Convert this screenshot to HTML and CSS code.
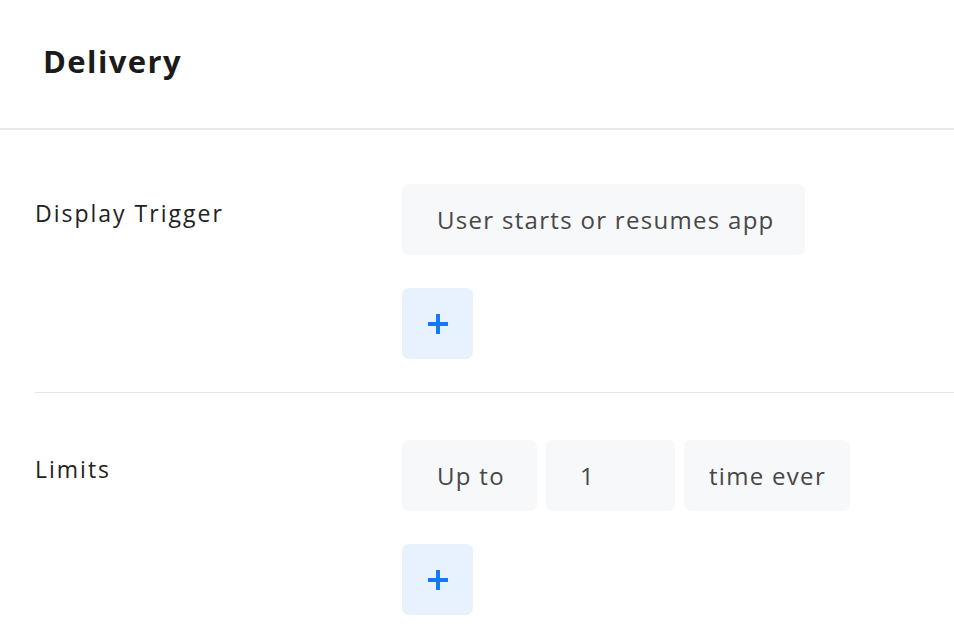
FILE: index.html
```html
<!DOCTYPE html>
<html>
<head>
<meta charset="utf-8">
<link rel="stylesheet" href="styles.css">
</head>
<body>
<div class="panel">
  <header class="header"><h1 class="title">Delivery</h1></header>
  <section class="section first">
    <div class="label">Display Trigger</div>
    <div class="content">
      <div class="row"><div class="box wide">User starts or resumes app</div></div>
      <button class="add" aria-label="Add">
        <svg width="20" height="20" viewBox="0 0 20 20"><path d="M10 0v20M0 10h20" stroke="#1877f2" stroke-width="4"/></svg>
      </button>
    </div>
  </section>
  <div class="divider"></div>
  <section class="section second">
    <div class="label">Limits</div>
    <div class="content">
      <div class="row">
        <div class="box upto">Up to</div>
        <div class="box num">1</div>
        <div class="box ever">time ever</div>
      </div>
      <button class="add" aria-label="Add">
        <svg width="20" height="20" viewBox="0 0 20 20"><path d="M10 0v20M0 10h20" stroke="#1877f2" stroke-width="4"/></svg>
      </button>
    </div>
  </section>
</div>
</body>
</html>
```
FILE: styles.css
```css
html, body {
  margin: 0;
  padding: 0;
  background: #fff;
}
body {
  font-family: "Open Sans", "Noto Sans", sans-serif;
  color: #222;
}
.header {
  height: 128px;
  border-bottom: 2px solid #e8e8e8;
  padding-left: 43px;
  box-sizing: content-box;
}
.title {
  margin: 0;
  padding-top: 42px;
  font-size: 31px;
  line-height: 38px;
  font-weight: 700;
  letter-spacing: 1.4px;
  color: #1b1b1b;
}
.section {
  display: grid;
  grid-template-columns: 367px 1fr;
  padding-left: 35px;
  padding-bottom: 33px;
}
.section.first { padding-top: 54px; }
.section.second { padding-top: 47px; }
.label {
  font-size: 23px;
  line-height: 30px;
  padding-top: 14px;
  letter-spacing: 2px;
  color: #222;
}
.content {
  display: flex;
  flex-direction: column;
  align-items: flex-start;
  gap: 33px;
}
.row {
  display: flex;
  gap: 9px;
}
.box {
  height: 71px;
  box-sizing: border-box;
  background: #f7f8fa;
  border-radius: 7px;
  display: flex;
  align-items: center;
  font-size: 24px;
  letter-spacing: 1.3px;
  color: #474747;
}
.wide { width: 403px; padding-left: 35px; }
.upto { width: 135px; padding-left: 35px; }
.num { width: 129px; padding-left: 34px; }
.ever { width: 166px; padding-left: 25px; }
.add {
  width: 71px;
  height: 71px;
  border: none;
  border-radius: 7px;
  background: #e8f1fe;
  display: flex;
  align-items: center;
  justify-content: center;
  padding: 0;
}
.add svg { display: block; }
.divider {
  height: 1px;
  background: #e6e6e6;
  margin-left: 35px;
}
```
